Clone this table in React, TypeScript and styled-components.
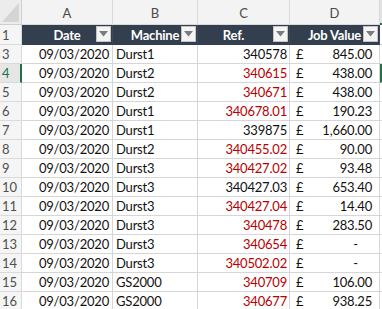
import React from 'react';
import styled, { createGlobalStyle, css } from 'styled-components';

const GRID = '#d6d6d6';
const GREEN = '#217346';
const NAVY = '#333f4f';
const RED = '#b80000';

const GlobalStyle = createGlobalStyle`
    html, body {
        margin: 0;
        padding: 0;
        background: #ffffff;
    }
    body {
        font-family: Lato, "Open Sans", "Liberation Sans", sans-serif;
        overflow: hidden;
    }
`;

const Viewport = styled.div`
    width: 382px;
    height: 309px;
    overflow: hidden;
`;

const Sheet = styled.div`
    display: grid;
    grid-template-columns: 22px 91px 85px 92px 90px 80px;
    grid-template-rows: 25px 20px;
    grid-auto-rows: 19px;
    width: 460px;
`;

const cellBase = css`
    box-sizing: border-box;
    border-right: 1px solid ${GRID};
    border-bottom: 1px solid ${GRID};
    display: flex;
    align-items: center;
    white-space: nowrap;
    overflow: hidden;
    font-size: 13px;
    letter-spacing: -0.2px;
    color: #111111;
`;

const Corner = styled.div`
    ${cellBase};
    background: #ececec;
    border-color: #cfcfcf;
    padding: 3px 2px 2px 2px;
    align-items: stretch;

    svg {
        width: 100%;
        height: 100%;
    }
`;

const ColHeader = styled.div<{ $active?: boolean }>`
    ${cellBase};
    justify-content: center;
    background: ${({ $active }) => ($active ? '#e2e2e2' : '#f3f3f3')};
    border-color: #dadada;
    color: #4a4a4a;
    letter-spacing: 0;
    padding-top: 2px;
    ${({ $active }) =>
        $active &&
        css`
            border-bottom: 2px solid ${GREEN};
        `}
`;

const RowHeader = styled.div<{ $active?: boolean }>`
    ${cellBase};
    background: #f5f5f5;
    border-color: #dadada;
    color: #4f4f4f;
    padding-left: 2px;
    letter-spacing: 0;
    ${({ $active }) =>
        $active &&
        css`
            color: ${GREEN};
            background: #e6e6e6;
            border-right: 2px solid ${GREEN};
        `}
`;

const HeadCell = styled.div<{ $shift?: number }>`
    ${cellBase};
    position: relative;
    justify-content: center;
    background: ${NAVY};
    border-right-color: #3e4a5b;
    border-bottom-color: ${NAVY};
    color: #ffffff;
    font-weight: 700;
    padding-right: ${({ $shift }) => $shift ?? 0}px;
`;

const FilterButton = styled.span`
    position: absolute;
    right: 1px;
    top: 1px;
    width: 15px;
    height: 16px;
    box-sizing: border-box;
    background: #f4f4f4;
    border: 1px solid #c4c4c4;
    display: flex;
    align-items: center;
    justify-content: center;
`;

const BlankCell = styled.div<{ $selected?: boolean }>`
    ${cellBase};
    ${({ $selected }) =>
        $selected &&
        css`
            border-left: 2px solid ${GREEN};
        `}
`;

const DateCell = styled.div`
    ${cellBase};
    justify-content: flex-end;
    padding-right: 3px;
`;

const TextCell = styled.div`
    ${cellBase};
    padding-left: 3px;
`;

const RefCell = styled.div<{ $flagged?: boolean }>`
    ${cellBase};
    justify-content: flex-end;
    padding-right: 2px;
    color: ${({ $flagged }) => ($flagged ? RED : '#111111')};
`;

const MoneyCell = styled.div`
    ${cellBase};
    justify-content: space-between;
    padding: 0 7px 0 6px;
`;

const Amount = styled.span<{ $dash?: boolean }>`
    padding-right: ${({ $dash }) => ($dash ? 14 : 0)}px;
`;

const FilterArrow = () => (
    <svg width="9" height="6" viewBox="0 0 9 6">
        <polygon points="0,0 9,0 4.5,5.5" fill="#7b7b7b" />
    </svg>
);

interface Job {
    row: number;
    date: string;
    machine: string;
    refNo: string;
    flagged: boolean;
    value: string;
}

const jobs: Job[] = [
    { row: 3, date: '09/03/2020', machine: 'Durst1', refNo: '340578', flagged: false, value: '845.00' },
    { row: 4, date: '09/03/2020', machine: 'Durst2', refNo: '340615', flagged: true, value: '438.00' },
    { row: 5, date: '09/03/2020', machine: 'Durst2', refNo: '340671', flagged: true, value: '438.00' },
    { row: 6, date: '09/03/2020', machine: 'Durst1', refNo: '340678.01', flagged: true, value: '190.23' },
    { row: 7, date: '09/03/2020', machine: 'Durst1', refNo: '339875', flagged: false, value: '1,660.00' },
    { row: 8, date: '09/03/2020', machine: 'Durst2', refNo: '340455.02', flagged: true, value: '90.00' },
    { row: 9, date: '09/03/2020', machine: 'Durst3', refNo: '340427.02', flagged: true, value: '93.48' },
    { row: 10, date: '09/03/2020', machine: 'Durst3', refNo: '340427.03', flagged: false, value: '653.40' },
    { row: 11, date: '09/03/2020', machine: 'Durst3', refNo: '340427.04', flagged: true, value: '14.40' },
    { row: 12, date: '09/03/2020', machine: 'Durst3', refNo: '340478', flagged: true, value: '283.50' },
    { row: 13, date: '09/03/2020', machine: 'Durst3', refNo: '340654', flagged: true, value: '-' },
    { row: 14, date: '09/03/2020', machine: 'Durst3', refNo: '340502.02', flagged: true, value: '-' },
    { row: 15, date: '09/03/2020', machine: 'GS2000', refNo: '340709', flagged: true, value: '106.00' },
    { row: 16, date: '09/03/2020', machine: 'GS2000', refNo: '340677', flagged: true, value: '938.25' },
];

const ACTIVE_ROW = 4;

const headers = [
    { label: 'Date', shift: 0 },
    { label: 'Machine', shift: 0 },
    { label: 'Ref.', shift: 20 },
    { label: 'Job Value', shift: 0 },
];

const App: React.FC = () => {
    return (
        <Viewport>
            <GlobalStyle />
            <Sheet>
                <Corner>
                    <svg viewBox="0 0 18 20" preserveAspectRatio="none">
                        <polygon points="18,0 18,20 0,20" fill="#d4d4d4" />
                    </svg>
                </Corner>
                {['A', 'B', 'C', 'D'].map((letter) => (
                    <ColHeader key={letter}>{letter}</ColHeader>
                ))}
                {/* column E is scrolled mostly out of view: only its active border shows */}
                <ColHeader $active />

                <RowHeader>1</RowHeader>
                {headers.map((h) => (
                    <HeadCell key={h.label} $shift={h.shift}>
                        {h.label}
                        <FilterButton>
                            <FilterArrow />
                        </FilterButton>
                    </HeadCell>
                ))}
                <BlankCell />

                {jobs.map((job) => (
                    <React.Fragment key={job.row}>
                        <RowHeader $active={job.row === ACTIVE_ROW}>{job.row}</RowHeader>
                        <DateCell>{job.date}</DateCell>
                        <TextCell>{job.machine}</TextCell>
                        <RefCell $flagged={job.flagged}>{job.refNo}</RefCell>
                        <MoneyCell>
                            <span>£</span>
                            <Amount $dash={job.value === '-'}>{job.value}</Amount>
                        </MoneyCell>
                        <BlankCell $selected={job.row === ACTIVE_ROW} />
                    </React.Fragment>
                ))}
            </Sheet>
        </Viewport>
    );
};

export default App;
